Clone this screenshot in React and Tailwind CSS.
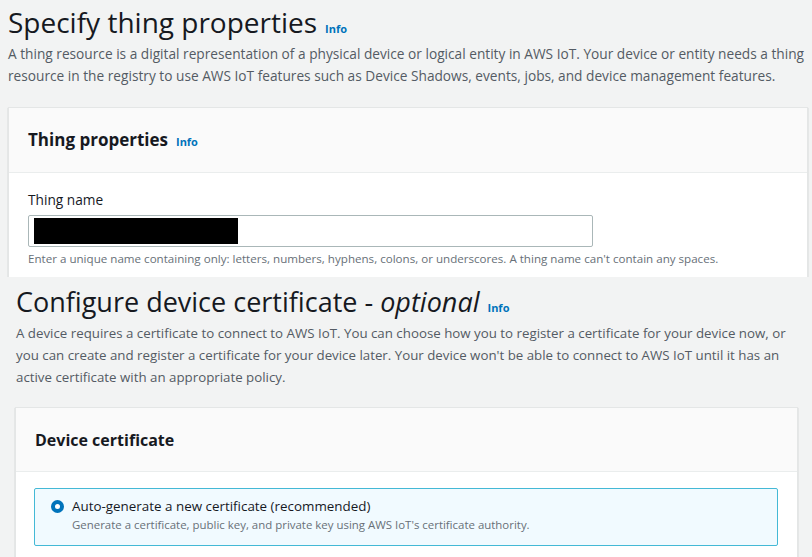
import React from "react";

function Info({ className = "" }) {
  return (
    <span className={`font-bold text-[11px] text-[#0073bb] ${className}`}>Info</span>
  );
}

export default function App() {
  return (
    <div className="w-[812px] h-[557px] overflow-hidden bg-[#f2f3f3] font-['Open_Sans',sans-serif] text-[#16191f]">
      {/* Specify thing properties */}
      <section className="h-[277px] overflow-hidden pl-2 pr-1">
        <div className="flex items-baseline gap-2 pt-[2px]">
          <h1 className="text-[28px] leading-[40px] font-normal">Specify thing properties</h1>
          <Info />
        </div>
        <p className="text-[13.7px] leading-[22px] text-[#545b64] mt-[1px]">
          A thing resource is a digital representation of a physical device or logical entity in AWS IoT. Your device or entity needs a thing resource in the registry to use AWS IoT features such as Device Shadows, events, jobs, and device management features.
        </p>
        <div className="mt-[20px] bg-white border-l border-r border-t border-[#e4e6e6] shadow-[0_1px_1px_0_rgba(0,28,36,0.3)]">
          <div className="h-[65px] bg-[#fafafa] border-b border-[#eaeded] flex items-center gap-2 px-[19px]">
            <h2 className="text-[17px] font-bold">Thing properties</h2>
            <Info className="mt-[4px]" />
          </div>
          <div className="px-[19px] pt-[17px] pb-8">
            <label className="block text-[13.7px] leading-[20px]">Thing name</label>
            <div className="mt-[5px] w-[565px] h-[32px] border border-[#aab7b8] rounded-[2px] bg-white flex items-center pl-[5px]">
              <div className="w-[204px] h-[26px] bg-black" />
            </div>
            <p className="mt-[3px] text-[11.6px] leading-[18px] text-[#687078]">
              Enter a unique name containing only: letters, numbers, hyphens, colons, or underscores. A thing name can't contain any spaces.
            </p>
          </div>
        </div>
      </section>

      {/* Configure device certificate */}
      <section className="pl-[15px] pr-[14px]">
        <div className="flex items-baseline gap-2 pt-[5px] pl-[1px]">
          <h1 className="text-[27px] leading-[40px] font-normal">
            Configure device certificate - <em className="italic">optional</em>
          </h1>
          <Info />
        </div>
        <p className="text-[13.3px] leading-[22px] text-[#545b64] pl-[1px]">
          A device requires a certificate to connect to AWS IoT. You can choose how you to register a certificate for your device now, or you can create and register a certificate for your device later. Your device won't be able to connect to AWS IoT until it has an active certificate with an appropriate policy.
        </p>
        <div className="mt-[19px] bg-white border-l border-r border-t border-[#e4e6e6] shadow-[0_1px_1px_0_rgba(0,28,36,0.3)]">
          <div className="h-[64px] bg-[#fafafa] border-b border-[#eaeded] flex items-center px-[19px]">
            <h2 className="text-[16px] font-bold">Device certificate</h2>
          </div>
          <div className="pl-[18px] pr-[19px] pt-4 pb-6">
            <div className="h-[58px] border border-[#44b9d6] bg-[#f1faff] rounded-[2px] flex items-start gap-[8px] pl-4 pt-[7px]">
              <span className="mt-[4px] w-[13px] h-[13px] rounded-full border-[4px] border-[#0073bb] bg-white shrink-0" />
              <div>
                <div className="text-[13.4px] leading-[20px]">Auto-generate a new certificate (recommended)</div>
                <div className="text-[11.45px] leading-[18px] text-[#687078]">
                  Generate a certificate, public key, and private key using AWS IoT's certificate authority.
                </div>
              </div>
            </div>
          </div>
        </div>
      </section>
    </div>
  );
}
